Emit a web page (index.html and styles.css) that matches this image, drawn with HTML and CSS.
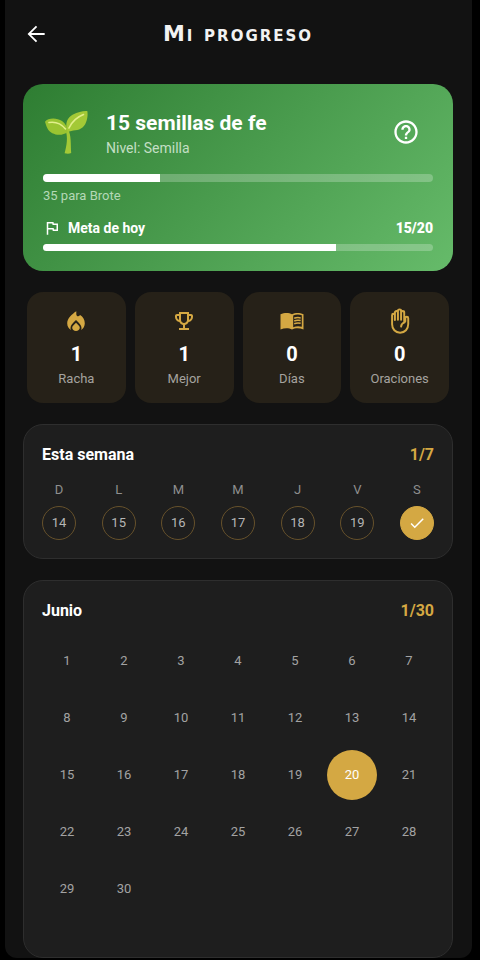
FILE: index.html
```html
<!DOCTYPE html>
<html lang="es">
<head>
<meta charset="utf-8">
<meta name="viewport" content="width=device-width, initial-scale=1">
<title>Mi progreso</title>
<link rel="stylesheet" href="styles.css">
</head>
<body>
<div class="screen">
  <header class="topbar">
    <button class="icon-button" type="button" aria-label="Volver">
      <svg width="26" height="26" viewBox="0 0 24 24" fill="#fff"><path d="M20 11.1H7.500l5.600-5.500L11.900 4.300 4.200 12l7.700 7.700 1.200-1.300-5.600-5.500H20z"/></svg>
    </button>
    <h1>Mi progreso</h1>
  </header>
  <main>
    <section class="level">
      <div class="level-head">
        <svg class="sprout" width="46" height="46" viewBox="0 0 46 46">
          <path d="M25 20c3.500 7 2.500 14 3.200 24-1.800 1-4.800.8-6.600.2C23.800 36 25 29 22.600 21z" fill="#a3c936"/>
          <path d="M25 23C18 28 8 26 4.500 19.500 3 17 2.500 14 2 12.800 5 8.500 14 8.500 19 12c3.500 2.500 5 6 6 11z" fill="#9ac431"/>
          <path d="M24.500 23C21.500 14 24.500 8.500 30 5.500 35 2.800 41 1.500 44.300 2c1 5-.5 13-4.800 16.500-4 3.500-10 2.500-15 4.500z" fill="#a3c936"/>
          <path d="M6 13.500c6-1 12 1 16.500 6.500" fill="none" stroke="#e2ef8b" stroke-width="1.600" stroke-linecap="round"/>
          <path d="M26 19C29 12.500 34 8 40.500 5.500" fill="none" stroke="#e2ef8b" stroke-width="1.600" stroke-linecap="round"/>
        </svg>
        <div class="level-text">
          <h2>15 semillas de fe</h2>
          <p>Nivel: Semilla</p>
        </div>
        <button class="icon-button" type="button" aria-label="Ayuda">
          <svg width="28" height="28" viewBox="0 0 24 24" fill="#fff"><path d="M11 18h2v-2h-2v2zm1-16C6.480 2 2 6.480 2 12s4.480 10 10 10 10-4.480 10-10S17.520 2 12 2zm0 18c-4.410 0-8-3.590-8-8s3.590-8 8-8 8 3.590 8 8-3.590 8-8 8zm0-14c-2.210 0-4 1.790-4 4h2c0-1.100.9-2 2-2s2 .9 2 2c0 2-3 1.750-3 5h2c0-2.250 3-2.500 3-5 0-2.210-1.790-4-4-4z"/></svg>
        </button>
      </div>
      <div class="bar"><div class="fill" style="width:30%"></div></div>
      <p class="next">35 para Brote</p>
      <div class="goal">
        <svg width="18" height="18" viewBox="0 0 24 24" fill="#fff"><path d="M12.360 6l.4 2H18v6h-3.360l-.4-2H7V6h5.360M14 4H5v17h2v-7h5.600l.4 2h7V6h-5.600L14 4z"/></svg>
        <span>Meta de hoy</span>
        <strong>15/20</strong>
      </div>
      <div class="bar bar-thin"><div class="fill" style="width:75%"></div></div>
    </section>

    <ul class="stats">
      <li>
        <svg width="24" height="24" viewBox="0 0 24 24" fill="#d4a843"><path d="M12.300 2.200C8 5 3.200 9.400 3.200 14.200c0 3 1.500 5.400 3.700 6.900-.3-.8-.4-1.500-.4-2.200 0-2.700 2.100-4.700 5.500-8 3.400 3.300 5.500 5.300 5.500 8 0 .7-.1 1.400-.4 2.200 2.300-1.500 3.700-4 3.700-6.900 0-3.400-1.800-6.300-4.700-8.200l-.5.600c-1.300 1.400-3.300.5-3.300-1.400z"/><path d="M12 13.700l-2.700 2.700c-.7.700-1.100 1.500-1.100 2.400 0 2 1.700 3.200 3.800 3.200s3.800-1.200 3.800-3.200c0-.9-.4-1.700-1.100-2.400z"/></svg>
        <strong>1</strong><span>Racha</span>
      </li>
      <li>
        <svg width="24" height="24" viewBox="0 0 24 24" fill="#d4a843"><path d="M19 5h-2V3H7v2H5c-1.100 0-2 .9-2 2v1c0 2.550 1.920 4.630 4.390 4.940.63 1.500 1.980 2.630 3.610 2.960V19H7v2h10v-2h-4v-3.100c1.630-.33 2.980-1.460 3.610-2.960C19.080 12.630 21 10.550 21 8V7c0-1.100-.9-2-2-2zM5 8V7h2v3.820C5.840 10.400 5 9.300 5 8zm7 6c-1.650 0-3-1.350-3-3V5h6v6c0 1.650-1.350 3-3 3zm7-6c0 1.300-.84 2.400-2 2.820V7h2v1z"/></svg>
        <strong>1</strong><span>Mejor</span>
      </li>
      <li>
        <svg width="24" height="24" viewBox="0 0 24 24"><path fill="#d4a843" d="M12 5.200C10.500 4.300 8.500 3.900 6.500 3.900S2.500 4.200.5 5.300v15.200c2-.9 4-1.300 6-1.300s4 .4 5.500 1.300c1.500-.9 3.500-1.300 5.500-1.300s4 .4 6 1.300V5.300c-2-1.100-4-1.400-6-1.400s-4 .4-5.500 1.300z"/><path fill="#262118" d="M13.200 6.600c2.600-1.200 5.800-1.300 8.600-.3v11.400c-2.800-.8-5.900-.7-8.600.5z"/><g fill="none" stroke="#d4a843" stroke-width="1.500"><path d="M14.200 9.300c2-.8 4.200-.9 6.500-.4M14.200 12c2-.8 4.200-.9 6.500-.4M14.200 14.700c2-.8 4.200-.9 6.500-.4"/></g></svg>
        <strong>0</strong><span>Días</span>
      </li>
      <li>
        <svg width="26" height="26" viewBox="0 0 24 24" fill="none" stroke="#d4a843" stroke-width="1.800" stroke-linejoin="round" stroke-linecap="round"><path d="M4.700 15V6.700c0-1.800 2.600-1.800 2.600 0V11M7.300 10.800V4.200c0-1.800 2.800-1.800 2.800 0v6.600M10.100 10.500V2.600c0-1.800 2.900-1.800 2.900 0v7.900M13 10.800V4.200c0-1.800 2.900-1.800 2.900 0v8.600l1 -.6V9.400c0-1.800 2.700-1.800 2.700 0v5.400c0 4.600-3.100 8-7.500 8s-7.400-3.400-7.400-7.800M16.300 13.300c-2 .6-3.200 1.900-3.300 3.900"/></svg>
        <strong>0</strong><span>Oraciones</span>
      </li>
    </ul>

    <section class="panel">
      <div class="panel-head"><h2>Esta semana</h2><strong>1/7</strong></div>
      <ol class="week">
        <li><span>D</span><b>14</b></li>
        <li><span>L</span><b>15</b></li>
        <li><span>M</span><b>16</b></li>
        <li><span>M</span><b>17</b></li>
        <li><span>J</span><b>18</b></li>
        <li><span>V</span><b>19</b></li>
        <li><span>S</span><b class="done"><svg width="18" height="18" viewBox="0 0 24 24" fill="#fff" role="img" aria-label="Completado"><path d="M9 16.170L4.830 12l-1.420 1.410L9 19 21 7l-1.410-1.410z"/></svg></b></li>
      </ol>
    </section>

    <section class="panel month-panel">
      <div class="panel-head"><h2>Junio</h2><strong>1/30</strong></div>
      <ol class="month">
        <li>1</li><li>2</li><li>3</li><li>4</li><li>5</li><li>6</li><li>7</li>
        <li>8</li><li>9</li><li>10</li><li>11</li><li>12</li><li>13</li><li>14</li>
        <li>15</li><li>16</li><li>17</li><li>18</li><li>19</li><li class="today">20</li><li>21</li>
        <li>22</li><li>23</li><li>24</li><li>25</li><li>26</li><li>27</li><li>28</li>
        <li>29</li><li>30</li>
      </ol>
    </section>
  </main>
</div>
</body>
</html>
```
FILE: styles.css
```css
* { box-sizing: border-box; margin: 0; padding: 0; }
body {
  background: #000;
  color: #fff;
  font-family: Roboto, "Liberation Sans", sans-serif;
  font-size: 14px;
  line-height: 20px;
  padding: 0 8px 2px 5px;
}
ul, ol { list-style: none; }
svg { display: block; flex: none; }
.screen {
  background: #121212;
  border-radius: 0 0 12px 12px;
  padding: 0 19px 0 18px;
  overflow: hidden;
}
.topbar {
  display: grid;
  grid-template-columns: 26px 1fr 26px;
  align-items: center;
  height: 68px;
  margin-bottom: 16px;
}
.topbar h1 {
  font-family: "DejaVu Sans", sans-serif;
  font-size: 22px;
  line-height: 28px;
  font-weight: 700;
  font-variant: small-caps;
  letter-spacing: 2px;
  text-align: center;
  color: #f2f2f2;
}
.icon-button {
  display: grid;
  place-items: center;
  border: 0;
  background: none;
  cursor: pointer;
}
.level {
  padding: 20px;
  border-radius: 20px;
  background: linear-gradient(135deg, #2e7d32, #66bb6a);
}
.level-head { display: flex; align-items: center; height: 56px; margin-bottom: 14px; }
.level-text { flex: 1; margin-left: 17px; padding-top: 3px; }
.level-text h2 { font-size: 21px; line-height: 28px; }
.level-text p { color: #c3dfc4; line-height: 22px; }
.level-head .icon-button { margin-right: 13px; }
.bar { height: 8px; border-radius: 4px; background: rgba(255,255,255,.24); overflow: hidden; }
.bar-thin { height: 7px; }
.fill { height: 100%; background: #fff; }
.next { font-size: 13px; line-height: 16px; margin-top: 6px; color: #b4d9b6; }
.goal { display: flex; align-items: center; gap: 7px; margin: 14px 0 6px; font-weight: 700; }
.goal strong { margin-left: auto; }
.stats { display: grid; grid-template-columns: repeat(4, 1fr); gap: 9px; margin: 21px 4px; }
.stats li {
  display: flex;
  flex-direction: column;
  align-items: center;
  height: 111px;
  padding-top: 16px;
  border-radius: 16px;
  background: #262118;
}
.stats svg { height: 26px; }
.stats strong { font-size: 20px; line-height: 24px; margin-top: 8px; }
.stats span { font-size: 13px; line-height: 16px; margin-top: 5px; color: #a5a39f; }
.panel {
  border: 1px solid #2e2e2e;
  border-radius: 20px;
  background: #1e1e1e;
  padding: 20px 18px 18px;
  margin-bottom: 21px;
}
.panel-head { display: flex; justify-content: space-between; font-size: 16px; }
.panel-head h2 { font-size: 16px; }
.panel-head strong { color: #d4a843; }
.week { display: flex; justify-content: space-between; margin-top: 17px; }
.week li { display: flex; flex-direction: column; align-items: center; gap: 8px; }
.week span { font-size: 13px; line-height: 16px; color: #8f8f8f; }
.week b {
  display: grid;
  place-items: center;
  width: 34px;
  height: 34px;
  border: 1px solid #66512b;
  border-radius: 50%;
  font-size: 13px;
  font-weight: 400;
  color: #b5b5b5;
}
.week .done { background: #d4a843; border-color: #d4a843; }
.month-panel { margin-bottom: 0; padding-bottom: 43px; }
.month { display: grid; grid-template-columns: repeat(7, 1fr); gap: 7px; margin-top: 15px; }
.month li {
  display: grid;
  place-items: center;
  aspect-ratio: 1;
  border-radius: 50%;
  font-size: 13px;
  color: #a3a3a3;
}
.month .today { background: #d4a843; color: #fff; }
```
